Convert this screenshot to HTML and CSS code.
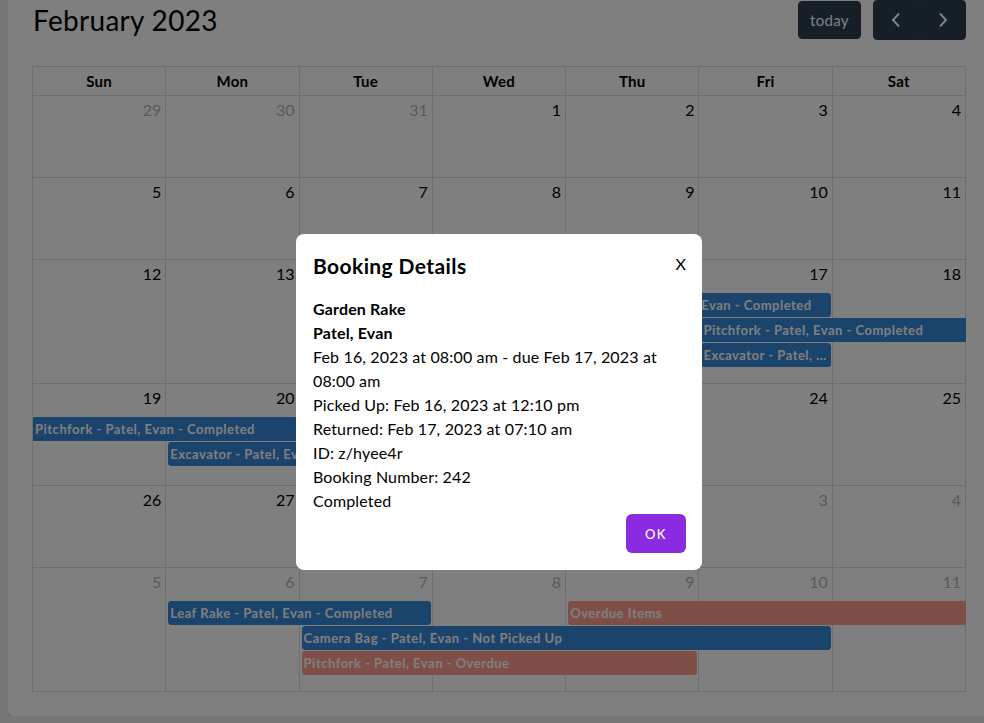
FILE: index.html
```html
<!DOCTYPE html>
<html lang="en">
<head>
    <meta charset="UTF-8">
    <meta name="viewport" content="width=device-width, initial-scale=1.0">
    <title>Bookings</title>
    <link rel="stylesheet" href="styles.css">
</head>
<body>
    <div class="card">
        <div class="toolbar">
            <h2 class="title">February 2023</h2>
            <div class="toolbar-buttons">
                <button class="btn btn-today">today</button>
                <div class="btn-group">
                    <button class="btn btn-nav" aria-label="prev">
                        <svg width="10" height="16" viewBox="0 0 10 16"><polyline points="8,1.5 2,8 8,14.5" fill="none" stroke="#ffffff" stroke-width="2"/></svg>
                    </button>
                    <button class="btn btn-nav" aria-label="next">
                        <svg width="10" height="16" viewBox="0 0 10 16"><polyline points="2,1.5 8,8 2,14.5" fill="none" stroke="#ffffff" stroke-width="2"/></svg>
                    </button>
                </div>
            </div>
        </div>

        <div class="calendar">
            <div class="head">
                <div>Sun</div><div>Mon</div><div>Tue</div><div>Wed</div><div>Thu</div><div>Fri</div><div>Sat</div>
            </div>

            <div class="week">
                <div class="day other"><span>29</span></div>
                <div class="day other"><span>30</span></div>
                <div class="day other"><span>31</span></div>
                <div class="day"><span>1</span></div>
                <div class="day"><span>2</span></div>
                <div class="day"><span>3</span></div>
                <div class="day"><span>4</span></div>
            </div>

            <div class="week">
                <div class="day"><span>5</span></div>
                <div class="day"><span>6</span></div>
                <div class="day"><span>7</span></div>
                <div class="day"><span>8</span></div>
                <div class="day"><span>9</span></div>
                <div class="day"><span>10</span></div>
                <div class="day"><span>11</span></div>
            </div>

            <div class="week week-tall">
                <div class="day"><span>12</span></div>
                <div class="day"><span>13</span></div>
                <div class="day"><span>14</span></div>
                <div class="day"><span>15</span></div>
                <div class="day"><span>16</span></div>
                <div class="day"><span>17</span></div>
                <div class="day"><span>18</span></div>
                <div class="event blue" style="grid-column: 5 / 7; grid-row: 2;">Garden Rake - Patel, Evan - Completed</div>
                <div class="event blue open-end" style="grid-column: 6 / 8; grid-row: 3;">Pitchfork - Patel, Evan - Completed</div>
                <div class="event blue" style="grid-column: 6 / 7; grid-row: 4;">Excavator - Patel, Evan - Completed</div>
            </div>

            <div class="week week-mid">
                <div class="day"><span>19</span></div>
                <div class="day"><span>20</span></div>
                <div class="day"><span>21</span></div>
                <div class="day"><span>22</span></div>
                <div class="day"><span>23</span></div>
                <div class="day"><span>24</span></div>
                <div class="day"><span>25</span></div>
                <div class="event blue open-start" style="grid-column: 1 / 3; grid-row: 2;">Pitchfork - Patel, Evan - Completed</div>
                <div class="event blue" style="grid-column: 2 / 4; grid-row: 3;">Excavator - Patel, Evan - Completed</div>
            </div>

            <div class="week">
                <div class="day"><span>26</span></div>
                <div class="day"><span>27</span></div>
                <div class="day"><span>28</span></div>
                <div class="day other"><span>1</span></div>
                <div class="day other"><span>2</span></div>
                <div class="day other"><span>3</span></div>
                <div class="day other"><span>4</span></div>
            </div>

            <div class="week week-tall">
                <div class="day other"><span>5</span></div>
                <div class="day other"><span>6</span></div>
                <div class="day other"><span>7</span></div>
                <div class="day other"><span>8</span></div>
                <div class="day other"><span>9</span></div>
                <div class="day other"><span>10</span></div>
                <div class="day other"><span>11</span></div>
                <div class="event blue" style="grid-column: 2 / 4; grid-row: 2;">Leaf Rake - Patel, Evan - Completed</div>
                <div class="event red open-end" style="grid-column: 5 / 8; grid-row: 2;">Overdue Items</div>
                <div class="event blue" style="grid-column: 3 / 7; grid-row: 3;">Camera Bag - Patel, Evan - Not Picked Up</div>
                <div class="event red" style="grid-column: 3 / 6; grid-row: 4;">Pitchfork - Patel, Evan - Overdue</div>
            </div>
        </div>
    </div>

    <div class="overlay">
        <div class="modal">
            <div class="modal-header">
                <h3>Booking Details</h3>
                <button class="close">X</button>
            </div>
            <div class="modal-body">
                <div class="strong">Garden Rake</div>
                <div class="strong">Patel, Evan</div>
                <div>Feb 16, 2023 at 08:00 am - due Feb 17, 2023 at 08:00 am</div>
                <div>Picked Up: Feb 16, 2023 at 12:10 pm</div>
                <div>Returned: Feb 17, 2023 at 07:10 am</div>
                <div>ID: z/hyee4r</div>
                <div>Booking Number: 242</div>
                <div>Completed</div>
            </div>
            <div class="modal-footer">
                <button class="btn-ok">OK</button>
            </div>
        </div>
    </div>
</body>
</html>
```

FILE: styles.css
```css
html {
    overflow: hidden;
}

body {
    margin: 0 0 8px 8px;
    background-color: #eeeeee;
    font-family: 'Lato', 'Noto Sans', sans-serif;
    color: #000000;
    font-size: 16px;
}

.card {
    margin-right: -6px;
    padding: 0 24px 24px 24px;
    background: #ffffff;
    border-radius: 0 0 6px 6px;
    box-shadow: 0 2px 6px rgba(0, 0, 0, 0.15);
}

.toolbar {
    display: flex;
    justify-content: space-between;
    align-items: center;
    height: 40px;
    margin-bottom: 26px;
}

.title {
    margin: 0 0 0 1px;
    font-size: 28px;
    font-weight: 400;
    line-height: 40px;
    letter-spacing: 0.3px;
}

.toolbar-buttons {
    display: flex;
    align-items: center;
    gap: 12px;
}

.btn {
    background-color: #2c3e50;
    border: 1px solid #2c3e50;
    color: #ffffff;
    font-family: inherit;
    border-radius: 4px;
    cursor: pointer;
}

.btn-today {
    height: 38px;
    width: 63px;
    font-size: 15px;
    padding: 0;
    letter-spacing: 0.3px;
}

.btn-group {
    display: flex;
}

.btn-nav {
    width: 46.5px;
    height: 40px;
    padding: 0;
    display: flex;
    align-items: center;
    justify-content: center;
}

.btn-nav:first-child {
    border-radius: 4px 0 0 4px;
}

.btn-nav:last-child {
    border-radius: 0 4px 4px 0;
}

.calendar {
    border-top: 1px solid #dddddd;
    border-left: 1px solid #dddddd;
}

.head {
    display: grid;
    grid-template-columns: repeat(7, 1fr);
    border-bottom: 1px solid #dddddd;
}

.head div {
    text-align: center;
    font-weight: 700;
    font-size: 15px;
    line-height: 28px;
    letter-spacing: 0.3px;
    border-right: 1px solid #dddddd;
}

.week {
    display: grid;
    grid-template-columns: repeat(7, 1fr);
    grid-template-rows: 33px 25px 25px 25px 1fr;
    height: 82px;
    box-sizing: border-box;
    border-bottom: 1px solid #dddddd;
}

.week-tall {
    height: 124px;
}

.week-mid {
    height: 102px;
}

.day {
    grid-row: 1 / -1;
    border-right: 1px solid #dddddd;
    text-align: right;
}

.day:nth-child(1) { grid-column: 1; }
.day:nth-child(2) { grid-column: 2; }
.day:nth-child(3) { grid-column: 3; }
.day:nth-child(4) { grid-column: 4; }
.day:nth-child(5) { grid-column: 5; }
.day:nth-child(6) { grid-column: 6; }
.day:nth-child(7) { grid-column: 7; }

.day span {
    display: block;
    padding: 4px 4px 0 0;
    line-height: 20px;
    font-size: 16px;
}

.day.other span {
    color: #b3b3b3;
}

.event {
    height: 24px;
    box-sizing: border-box;
    margin: 0 2px 1px 2px;
    padding: 0 1px;
    border-radius: 3px;
    color: #ffffff;
    font-size: 13px;
    font-weight: 700;
    letter-spacing: 0.5px;
    line-height: 22px;
    white-space: nowrap;
    overflow: hidden;
    text-overflow: ellipsis;
    z-index: 1;
}

.event.blue {
    background-color: #3788d8;
    border: 1px solid #3788d8;
}

.event.red {
    background-color: #ff9e8e;
    border: 1px solid #ff9e8e;
}

.event.open-end {
    margin-right: 0;
    border-top-right-radius: 0;
    border-bottom-right-radius: 0;
}

.event.open-start {
    margin-left: 0;
    border-top-left-radius: 0;
    border-bottom-left-radius: 0;
}

.overlay {
    position: fixed;
    top: 0;
    left: 0;
    right: 0;
    bottom: 0;
    background-color: rgba(0, 0, 0, 0.5);
    padding: 234px 0 0 296px;
    z-index: 10;
}

.modal {
    width: 406px;
    box-sizing: border-box;
    background: #ffffff;
    border-radius: 8px;
    padding: 16px 16px 17px 17px;
}

.modal-header {
    display: flex;
    justify-content: space-between;
    align-items: center;
}

.modal-header h3 {
    margin: 0;
    font-size: 21px;
    font-weight: 700;
    line-height: 32px;
    letter-spacing: 0.4px;
}

.close {
    background: none;
    border: none;
    padding: 0 0 6px 0;
    font-family: inherit;
    font-size: 16px;
    color: #000000;
    cursor: pointer;
}

.modal-body {
    margin-top: 15px;
    line-height: 24px;
    letter-spacing: 0.15px;
}

.modal-body .strong {
    font-weight: 700;
}

.modal-footer {
    display: flex;
    justify-content: flex-end;
    margin-top: 1px;
}

.btn-ok {
    width: 60px;
    height: 39px;
    background-color: #8a2be2;
    color: #ffffff;
    border: none;
    border-radius: 6px;
    font-family: inherit;
    font-size: 13px;
    font-weight: 500;
    letter-spacing: 1.5px;
    cursor: pointer;
}
```
